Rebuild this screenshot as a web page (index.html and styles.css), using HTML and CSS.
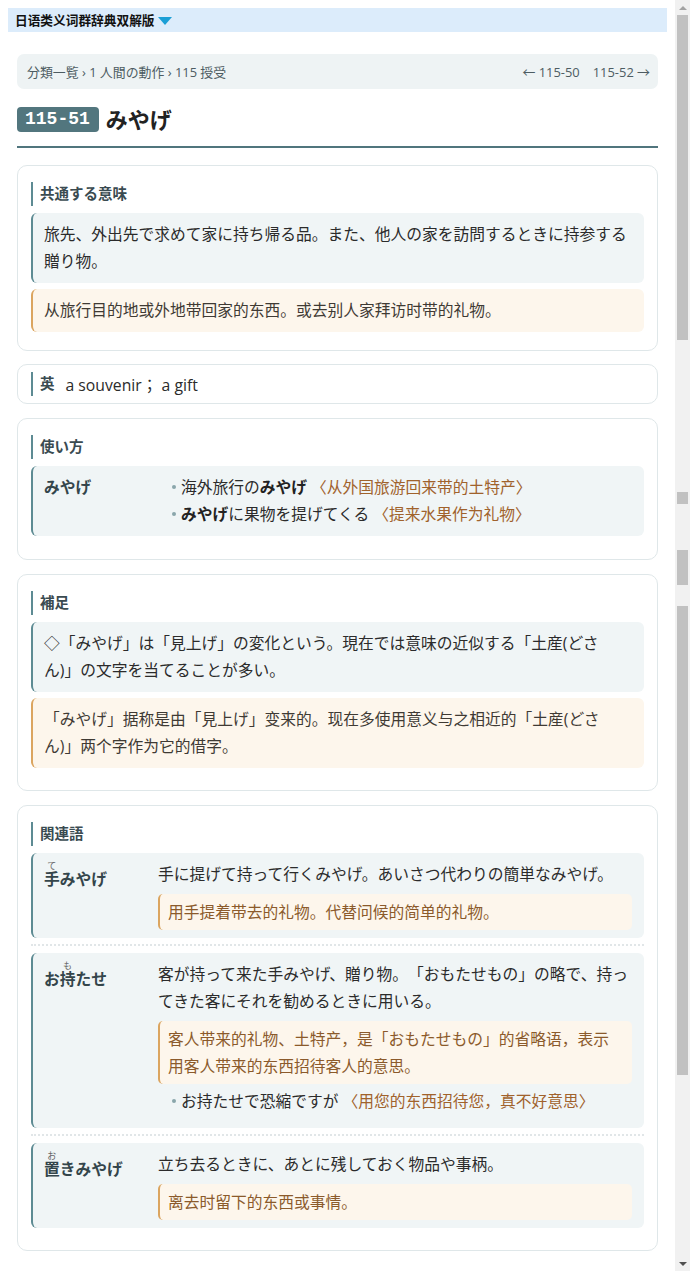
FILE: index.html
```html
<!DOCTYPE html>
<html lang="ja">
<head>
  <meta charset="UTF-8" />
  <meta name="viewport" content="width=device-width, initial-scale=1.0" />
  <title>みやげ - 日语类义词群辞典双解版</title>
  <link rel="stylesheet" href="styles.css">
</head>
<body>
  <div class="page">
    <div class="topbar" lang="zh-CN"><span>日语类义词群辞典双解版</span><span class="caret"></span></div>

    <main class="wrap">
      <nav class="crumbs">
        <div class="path"><a href="#">分類一覧</a> › <a href="#">1 人間の動作</a> › <a href="#">115 授受</a></div>
        <div class="pager"><a href="#">← 115-50</a><a href="#">115-52 →</a></div>
      </nav>

      <h1 class="title"><span class="num">115-51</span>みやげ</h1>

      <section class="card card-meaning">
        <h2 class="label">共通する意味</h2>
        <p class="jp">旅先、外出先で求めて家に持ち帰る品。また、他人の家を訪問するときに持参する贈り物。</p>
        <p class="zh" lang="zh-CN">从旅行目的地或外地带回家的东西。或去别人家拜访时带的礼物。</p>
      </section>

      <section class="card card-en">
        <h2 class="label">英</h2>
        <span>a souvenir； a gift</span>
      </section>

      <section class="card">
        <h2 class="label">使い方</h2>
        <div class="jp row">
          <div class="term">みやげ</div>
          <ul class="examples">
            <li>海外旅行の<b>みやげ</b> <span class="gloss" lang="zh-CN">〈从外国旅游回来带的土特产〉</span></li>
            <li><b>みやげ</b>に果物を提げてくる <span class="gloss" lang="zh-CN">〈提来水果作为礼物〉</span></li>
          </ul>
        </div>
      </section>

      <section class="card card-note">
        <h2 class="label">補足</h2>
        <p class="jp">◇「みやげ」は「見上げ」の変化という。現在では意味の近似する「土産(どさん)」の文字を当てることが多い。</p>
        <p class="zh" lang="zh-CN">「みやげ」据称是由「見上げ」变来的。现在多使用意义与之相近的「土産(どさん)」两个字作为它的借字。</p>
      </section>

      <section class="card card-note">
        <h2 class="label">関連語</h2>

        <div class="rel">
          <div class="jp row">
            <div class="term"><ruby>手<rt>て</rt></ruby>みやげ</div>
            <div class="def">
              <p>手に提げて持って行くみやげ。あいさつ代わりの簡単なみやげ。</p>
              <p class="sub" lang="zh-CN">用手提着带去的礼物。代替问候的简单的礼物。</p>
            </div>
          </div>
        </div>

        <div class="rel">
          <div class="jp row">
            <div class="term">お<ruby>持<rt>も</rt></ruby>たせ</div>
            <div class="def">
              <p>客が持って来た手みやげ、贈り物。「おもたせもの」の略で、持ってきた客にそれを勧めるときに用いる。</p>
              <p class="sub" lang="zh-CN">客人带来的礼物、土特产，是「おもたせもの」的省略语，表示用客人带来的东西招待客人的意思。</p>
              <ul class="examples">
                <li>お持たせで恐縮ですが <span class="gloss" lang="zh-CN">〈用您的东西招待您，真不好意思〉</span></li>
              </ul>
            </div>
          </div>
        </div>

        <div class="rel">
          <div class="jp row">
            <div class="term"><ruby>置<rt>お</rt></ruby>きみやげ</div>
            <div class="def">
              <p>立ち去るときに、あとに残しておく物品や事柄。</p>
              <p class="sub" lang="zh-CN">离去时留下的东西或事情。</p>
            </div>
          </div>
        </div>
      </section>
    </main>
  </div>

  <div class="scrollbar">
    <div class="arrow up"></div>
    <div class="rail"></div>
    <div class="arrow down"></div>
  </div>
</body>
</html>
```

FILE: styles.css
```css
html, body {
  margin: 0;
  height: 1271px;
  overflow: hidden;
}
body {
  display: flex;
  font-family: "Open Sans", "Noto Sans CJK JP", sans-serif;
  color: #2b2b2b;
  background: #fff;
  text-spacing-trim: space-all;
}
.page {
  flex: 1;
  min-width: 0;
  padding: 8px;
}

/* site bar */
.topbar {
  display: flex;
  align-items: center;
  gap: 3px;
  height: 24px;
  padding-left: 7px;
  background: #dcecfb;
  font: bold 12.7px/24px "Noto Sans CJK SC", sans-serif;
  color: #111;
}
.caret {
  width: 0;
  height: 0;
  margin-top: 2px;
  border-left: 7px solid transparent;
  border-right: 7px solid transparent;
  border-top: 8px solid #1b9fd6;
}

.wrap {
  padding: 22px 9px 0;
}

/* breadcrumb */
.crumbs {
  display: flex;
  justify-content: space-between;
  align-items: center;
  height: 35px;
  padding: 0 8px 0 10px;
  background: #eef3f4;
  border-radius: 7px;
  font-size: 12.9px;
  color: #4d5c62;
}
.crumbs a {
  color: inherit;
  text-decoration: none;
}
.pager {
  display: flex;
  gap: 13px;
}

/* heading */
.title {
  display: flex;
  align-items: center;
  gap: 7px;
  margin: 18px 0 0;
  padding-bottom: 14px;
  border-bottom: 2px solid #50757d;
  font-size: 22px;
  line-height: 25px;
  font-weight: bold;
  color: #222;
}
.num {
  padding: 0 9px 0 8px;
  border-radius: 4px;
  background: #52767e;
  color: #fff;
  font: bold 18px/25px "Liberation Mono", monospace;
}

/* cards */
.card {
  margin-top: 14px;
  padding: 16px 13px 23px;
  border: 1px solid #dfe7e9;
  border-radius: 10px;
}
.card-meaning {
  margin-top: 17px;
  padding-bottom: 18px;
}
.card-note {
  padding-bottom: 22px;
}
.card-en {
  display: flex;
  align-items: center;
  gap: 11px;
  margin-top: 13px;
  padding: 7px 13px;
  font-size: 15.75px;
}
.card-en .label {
  margin: 0;
}
.label {
  margin: 0 0 7px;
  padding-left: 7px;
  border-left: 2px solid #5d8b93;
  font-size: 14.5px;
  line-height: 24px;
  font-weight: bold;
  color: #3a4b51;
}

.jp, .zh {
  margin: 0 0 6px;
  padding: 8px 12px 8px 11px;
  border-radius: 6px;
  font-size: 15.75px;
  line-height: 27px;
}
.jp {
  background: #f0f5f6;
  border-left: 2px solid #5d8b93;
}
.zh {
  background: #fdf6ec;
  border-left: 2px solid #dba560;
  color: #3f3a34;
  font-family: "Open Sans", "Noto Sans CJK SC", sans-serif;
}
.card > :last-child {
  margin-bottom: 0;
}

/* term + content rows */
.row {
  display: grid;
  grid-template-columns: 114px 1fr;
}
.term {
  font-weight: bold;
  color: #34454b;
}
.term rt {
  font-size: 9px;
  font-weight: normal;
  color: #666;
}
.examples {
  margin: 0;
  padding-left: 14px;
  list-style: none;
}
.examples li::before {
  content: "";
  display: inline-block;
  width: 4px;
  height: 4px;
  margin: 0 5px 4px 0;
  border-radius: 50%;
  background: #8aa6ab;
  vertical-align: middle;
}
.examples b {
  color: #222;
}
.gloss {
  color: #a0622c;
  font-family: "Open Sans", "Noto Sans CJK SC", sans-serif;
}

/* related words */
.rel {
  margin-bottom: 7px;
  padding-bottom: 6px;
  border-bottom: 2px dotted #e1e6e8;
}
.rel:last-child {
  margin-bottom: 0;
  padding-bottom: 0;
  border-bottom: none;
}
.rel .jp {
  margin-bottom: 0;
}
.rel .term {
  padding-top: 4px;
}
.def p {
  margin: 0;
}
.def .sub {
  margin-top: 6px;
  padding: 5px 10px 4px 8px;
  border-left: 2px solid #dba560;
  border-radius: 5px;
  background: #fdf6ec;
  color: #8b5a2b;
  font-family: "Open Sans", "Noto Sans CJK SC", sans-serif;
}
.def .examples {
  margin: 4px 0 5px;
}

/* page scrollbar as captured */
.scrollbar {
  display: flex;
  flex-direction: column;
  width: 15px;
  background: #f1f1f1;
}
.rail {
  flex: 1;
  margin: 0 2px;
  background: linear-gradient(to bottom,
    #c1c1c1 0 325px, transparent 325px 477px,
    #c1c1c1 477px 489px, transparent 489px 535px,
    #c1c1c1 535px 570px, transparent 570px 591px,
    #c1c1c1 591px 1060px, transparent 1060px);
}
.arrow {
  display: flex;
  justify-content: center;
  align-items: center;
  height: 15px;
}
.arrow::before {
  content: "";
  border-left: 4px solid transparent;
  border-right: 4px solid transparent;
}
.arrow.up::before {
  border-bottom: 4px solid #a3a3a3;
}
.arrow.down::before {
  border-top: 4px solid #505050;
}
```
